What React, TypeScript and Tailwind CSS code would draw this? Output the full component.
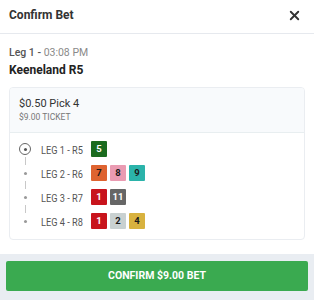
import { X } from 'lucide-react';

type Horse = { n: string; bg: string; fg: string };

const legs: { label: string; horses: Horse[] }[] = [
  { label: 'LEG 1 - R5', horses: [{ n: '5', bg: 'bg-[#1b6b1f]', fg: 'text-white' }] },
  {
    label: 'LEG 2 - R6',
    horses: [
      { n: '7', bg: 'bg-[#de6330]', fg: 'text-[#1a1a1a]' },
      { n: '8', bg: 'bg-[#ea9bb2]', fg: 'text-[#1a1a1a]' },
      { n: '9', bg: 'bg-[#2bb3aa]', fg: 'text-[#1a1a1a]' },
    ],
  },
  {
    label: 'LEG 3 - R7',
    horses: [
      { n: '1', bg: 'bg-[#c8141c]', fg: 'text-white' },
      { n: '11', bg: 'bg-[#666666]', fg: 'text-white' },
    ],
  },
  {
    label: 'LEG 4 - R8',
    horses: [
      { n: '1', bg: 'bg-[#c8141c]', fg: 'text-white' },
      { n: '2', bg: 'bg-[#c9d1d1]', fg: 'text-[#1a1a1a]' },
      { n: '4', bg: 'bg-[#d8b23f]', fg: 'text-[#1a1a1a]' },
    ],
  },
];

const App = () => {
  return (
    <div className="w-[314px] h-[300px] bg-white flex flex-col font-['Roboto',sans-serif] text-[#333]">
      {/* Header */}
      <div className="h-[34px] flex items-center justify-between px-[9px] pb-[3px] border-b border-[#e6e9ee] shrink-0">
        <span className="text-[12px] font-bold text-[#333]">Confirm Bet</span>
        <X className="w-[15px] h-[15px] text-[#333] mr-[3px]" strokeWidth={3} />
      </div>

      <div className="flex-1 px-[9px] pt-[11px]">
        <div className="text-[10.5px] leading-[16px]">
          <span className="text-[#555] font-medium">Leg 1 - </span>
          <span className="text-[#8a8a8a]">03:08 PM</span>
        </div>
        <div className="text-[12px] font-bold leading-[18px] text-[#222]">Keeneland R5</div>

        {/* Ticket card */}
        <div className="mt-[8px] border border-[#eaedf1] rounded-[4px] overflow-hidden">
          <div className="bg-[#f8fafc] border-b border-[#e8eef0] px-[9px] pt-[8px] pb-[8px]">
            <div className="text-[11px] leading-[15px] text-[#333]">$0.50 Pick 4</div>
            <div className="text-[8.5px] leading-[13px] text-[#777]">$9.00 TICKET</div>
          </div>
          <div className="px-[9px] pt-[8px] pb-[10px] flex flex-col">
            {legs.map((leg, i) => (
              <div key={i} className="flex flex-col">
                {i > 0 && (
                  <div className="w-[12px] flex justify-center">
                    <div className="w-px h-[8px] bg-[#c8c8c8]" />
                  </div>
                )}
                <div className="flex items-center h-[16px]">
                  <div className="w-[12px] flex items-center justify-center shrink-0">
                    {i === 0 ? (
                      <div className="w-[12px] h-[12px] rounded-full border-[1.5px] border-[#666] flex items-center justify-center">
                        <div className="w-[3px] h-[3px] rounded-full bg-[#555]" />
                      </div>
                    ) : (
                      <div className="w-[3px] h-[3px] rounded-full bg-[#999]" />
                    )}
                  </div>
                  <div className="ml-[10px] w-[50px] shrink-0 whitespace-nowrap">
                    <span className="inline-block origin-left scale-x-[0.8] text-[11.5px] text-[#555]">{leg.label}</span>
                  </div>
                  <div className="flex gap-[3px]">
                    {leg.horses.map((h, j) => (
                      <div
                        key={j}
                        className={`${h.bg} ${h.fg} w-[16px] h-[16px] rounded-[1px] flex items-center justify-center text-[9.5px] font-bold`}
                      >
                        {h.n}
                      </div>
                    ))}
                  </div>
                </div>
              </div>
            ))}
          </div>
        </div>
      </div>

      {/* Footer */}
      <div className="h-[46px] bg-[#e9edf2] px-[6px] pt-[7px] shrink-0">
        <button className="w-full h-[30px] bg-[#3aaa50] rounded-[2px] text-white text-[10.5px] font-bold">
          CONFIRM $9.00 BET
        </button>
      </div>
    </div>
  );
};

export default App;
